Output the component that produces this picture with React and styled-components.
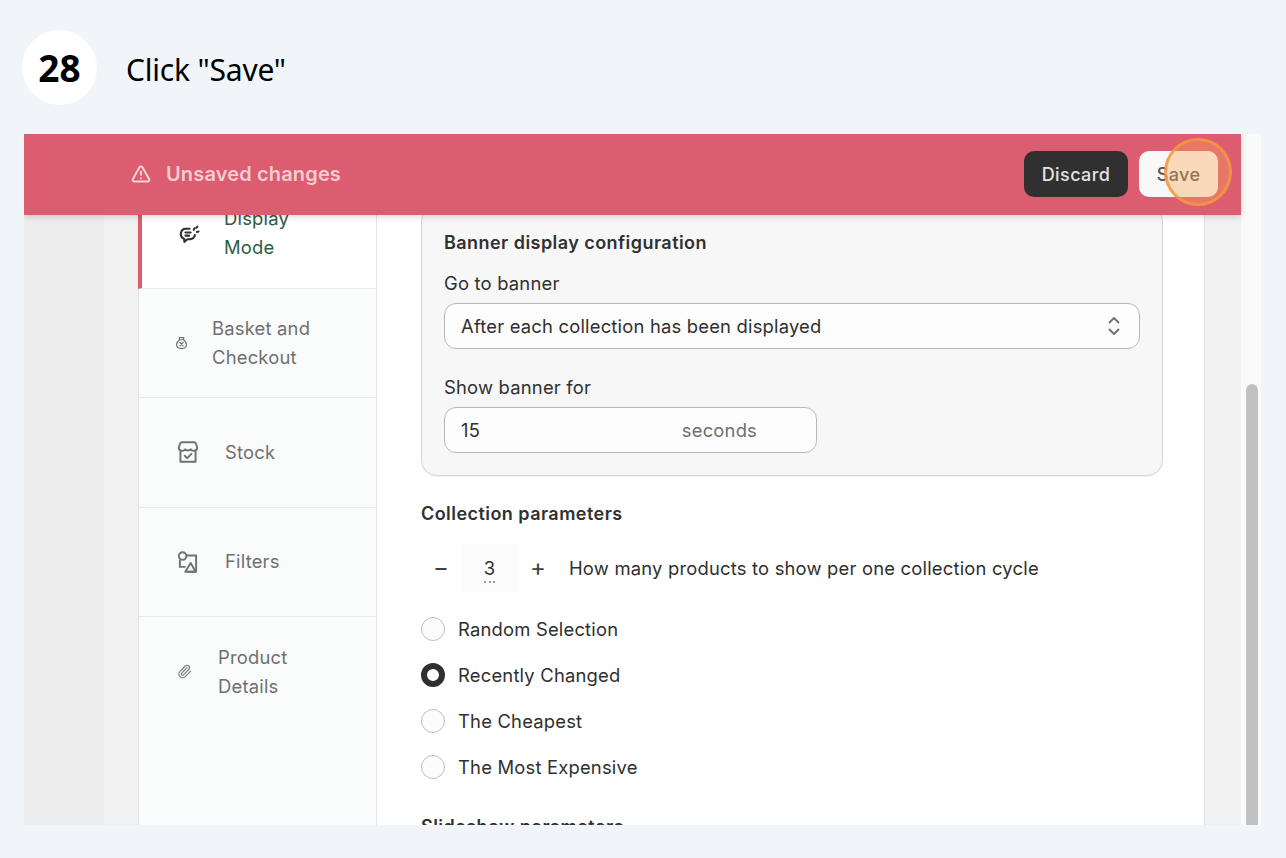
import React from 'react'
import styled, { createGlobalStyle } from 'styled-components'
import { Paperclip, TriangleAlert } from 'lucide-react'

const Global = createGlobalStyle`
  html, body { margin: 0; padding: 0; background: #f1f5fa; }
  body { height: 858px; overflow: hidden; font-family: Inter, "Liberation Sans", sans-serif; }
`

const Page = styled.div`
  width: 1286px;
  height: 858px;
  display: flex;
  flex-direction: column;
`
const StepHeader = styled.header`
  height: 134px;
  padding: 30px 0 0 22px;
  box-sizing: border-box;
  display: flex;
  align-items: flex-start;
  gap: 29px;
  font-family: "Noto Sans", "Open Sans", sans-serif;
  color: #000;
`
const StepNumber = styled.div`
  width: 75px;
  height: 75px;
  border-radius: 50%;
  background: #fff;
  display: flex;
  align-items: center;
  justify-content: center;
  font-size: 37px;
  font-weight: 700;
`
const StepTitle = styled.div`
  font-size: 30px;
  line-height: 80px;
  letter-spacing: -0.2px;
`
const Frame = styled.div`
  position: relative;
  margin-left: 24px;
  width: 1237px;
  height: 691px;
  display: flex;
  overflow: hidden;
`
const Viewport = styled.div`
  width: 1217px;
  display: flex;
  flex-direction: column;
  background: #ededed;
`
const Banner = styled.div`
  position: relative;
  z-index: 2;
  flex: 0 0 81px;
  background: #dc5d70;
  box-shadow: 0 2px 6px rgba(0, 0, 0, 0.15);
  display: flex;
  align-items: center;
  padding: 0 23px 2px 107px;
  box-sizing: border-box;
`
const BannerText = styled.div`
  margin-left: 15px;
  padding-top: 1px;
  flex: 1;
  font-size: 20px;
  font-weight: 600;
  letter-spacing: 0.15px;
  color: rgba(255, 255, 255, 0.7);
`
const Warning = styled(TriangleAlert)`
  color: rgba(255, 255, 255, 0.72);
  flex: none;
`
const Button = styled.button`
  height: 46px;
  width: ${p => p.$w}px;
  margin-left: ${p => p.$ml}px;
  border-radius: 10px;
  border: 0;
  padding: 2px 0 0;
  font: 500 18px Inter, sans-serif;
  letter-spacing: 0.4px;
  background: ${p => (p.$dark ? '#303030' : '#f8f8f8')};
  color: ${p => (p.$dark ? '#e3e3e3' : '#555')};
`
const Workspace = styled.div`
  flex: 1;
  min-height: 0;
  display: flex;
  overflow: hidden;
`
const Gutter = styled.div`
  flex: 0 0 80px;
  background: #ededed;
`
const Surface = styled.div`
  flex: 1;
  background: #f1f1f1;
  padding: 0 36px 0 34px;
  min-width: 0;
`
const Card = styled.div`
  margin-top: -36px;
  display: flex;
  height: 900px;
  background: #fff;
  border-right: 1px solid #dfdfdf;
  font-size: 18.4px;
  letter-spacing: 0.2px;
`
const Sidebar = styled.nav`
  flex: 0 0 239px;
  box-sizing: border-box;
  background: #fafbfb;
  border-left: 1px solid #e3e3e3;
  border-right: 1px solid #e3e3e3;
`
const Tab = styled.div`
  height: 109.5px;
  box-sizing: border-box;
  display: flex;
  align-items: center;
  gap: 24px;
  margin-left: ${p => (p.$active ? -1 : 0)}px;
  padding-left: ${p => (p.$active ? 33 : 36)}px;
  background: ${p => (p.$active ? '#fff' : 'transparent')};
  border-left: ${p => (p.$active ? '4px solid #dc5d70' : '0')};
  border-bottom: ${p => (p.$last ? '0' : '1px solid #e8e8e8')};
  line-height: 29px;
  color: ${p => (p.$active ? '#2f5d46' : '#6f7070')};
  svg { flex: none; }
`
const TabIcon = styled.svg`
  color: ${p => (p.$active ? '#303030' : '#727272')};
  fill: none;
  stroke: currentColor;
  stroke-width: ${p => p.$sw || 1.8};
  stroke-linecap: round;
  stroke-linejoin: round;
`
const Clip = styled(Paperclip)`
  color: #7a7a7a;
  margin: 0 2px;
`
const Main = styled.main`
  flex: 1;
  padding: 26px 41px 0 44px;
  color: #303030;
  min-width: 0;
`
const Panel = styled.section`
  height: 271px;
  box-sizing: border-box;
  background: #f7f7f7;
  border: 1px solid #d6d6d6;
  border-radius: 16px;
  padding: 24px 22px 0;
  box-shadow: 0 1px 1px rgba(0, 0, 0, 0.05);
`
const SectionTitle = styled.h3`
  margin: ${p => p.$mt || 0}px 0 0;
  font-size: 18px;
  font-weight: 600;
  letter-spacing: 0.45px;
  line-height: 26px;
`
const FieldLabel = styled.div`
  line-height: 26px;
  margin: ${p => p.$mt}px 0 7px;
`
const Field = styled.div`
  width: ${p => p.$w}px;
  height: 46px;
  box-sizing: border-box;
  background: #fdfdfd;
  border: 1px solid #b8b8b8;
  border-radius: 12px;
  display: flex;
  align-items: center;
  justify-content: space-between;
  padding: 0 17px 0 16px;
`
const Suffix = styled.span`
  color: #6f6f6f;
  margin-right: 42px;
`
const Stepper = styled.div`
  display: flex;
  align-items: center;
  height: 48px;
  margin-top: 17px;
`
const StepButton = styled.span`
  width: 40px;
  text-align: center;
  font-size: 24px;
  line-height: 48px;
  color: #404040;
`
const StepValue = styled.span`
  width: 57px;
  height: 48px;
  background: #fbfbfb;
  text-align: center;
  line-height: 48px;
  position: relative;
  &::after {
    content: '';
    position: absolute;
    left: 23px;
    bottom: 9px;
    width: 11px;
    border-bottom: 2px dotted #9a9a9a;
  }
`
const StepLabel = styled.span`
  margin-left: 11px;
`
const RadioList = styled.div`
  margin-top: 14px;
  display: flex;
  flex-direction: column;
`
const RadioRow = styled.label`
  height: 46px;
  display: flex;
  align-items: center;
  gap: 13px;
`
const RadioDot = styled.span`
  width: 24px;
  height: 24px;
  box-sizing: border-box;
  border-radius: 50%;
  background: ${p => (p.$on ? '#fff' : '#fcfcfc')};
  border: ${p => (p.$on ? '6px solid #303030' : '1.5px solid #bfbfbf')};
`
const Scrollbar = styled.div`
  flex: 0 0 20px;
  background: #fafafa;
  border-right: 1px solid #efefef;
  box-sizing: border-box;
  padding: 250px 7px 0 5px;
`
const Thumb = styled.div`
  height: 100%;
  width: 12px;
  background: #c1c1c1;
  border-radius: 6px 6px 0 0;
`
const Highlight = styled.div`
  position: absolute;
  left: 1140px;
  top: 4px;
  width: 68px;
  height: 68px;
  box-sizing: border-box;
  border-radius: 50%;
  border: 3px solid rgba(245, 150, 65, 0.85);
  background: rgba(250, 165, 85, 0.38);
  z-index: 3;
`

const Chat = () => (
  <TabIcon $active width="25" height="25" viewBox="-2 0 24 24" $sw={2}>
    <path d="M12 7.500H8.500a5 5 0 0 0-1.600 9.700V20l3-2.500h2.600a5 5 0 0 0 4.600-4" />
    <path d="M8 11h5M8 14h3.500" />
    <path d="M16 8.500l.6-1.500M19 10.500l1.600-.4M18.500 6.500l1-1" />
  </TabIcon>
)
const Bag = () => (
  <TabIcon width="13" height="16" viewBox="0 0 24 24" $sw={2.2}>
    <path d="M8 2h8v4H8zM8.500 6C4 9 3 12 3 15c0 5 3 7 9 7s9-2 9-7c0-3-1-6-5.500-9" />
    <path d="M9 11l6 6M15 11l-6 6" />
  </TabIcon>
)
const Store = () => (
  <TabIcon width="26" height="26" viewBox="0 0 24 24">
    <path d="M6.500 3h11a2 2 0 0 1 1.900 1.400l1.100 3.600c0 3-4.500 4-6 1.500-1 1.400-4 1.400-5 0-1.500 2.500-6 1.500-6-1.500l1.100-3.600A2 2 0 0 1 6.500 3z" />
    <path d="M5 11.500V21h14v-9.500" />
    <path d="M9 15.500l2.200 2.200 4-4" />
  </TabIcon>
)
const Shapes = () => (
  <TabIcon width="26" height="26" viewBox="0 0 24 24">
    <circle cx="7" cy="6.500" r="3.500" />
    <path d="M11 6h8.500v15H12M4.500 10.500V16.500H9" />
    <path d="M9.500 21l5-8 4.500 8z" />
  </TabIcon>
)

const tabs = [
  { label: ['Display', 'Mode'], icon: <Chat />, active: true },
  { label: ['Basket and', 'Checkout'], icon: <Bag /> },
  { label: ['Stock'], icon: <Store /> },
  { label: ['Filters'], icon: <Shapes /> },
  { label: ['Product', 'Details'], icon: <Clip size={15} strokeWidth={1.8} />, last: true },
]

const radios = ['Random Selection', 'Recently Changed', 'The Cheapest', 'The Most Expensive']

const Chevrons = () => (
  <svg width="16" height="22" viewBox="0 0 16 22" fill="none" stroke="#6d6d6d" strokeWidth="1.8" strokeLinecap="round" strokeLinejoin="round">
    <path d="M3.500 7.500L8 3l4.500 4.500M3.500 14.500L8 19l4.500-4.500" />
  </svg>
)

export default function App() {
  return (
    <Page>
      <Global />
      <StepHeader>
        <StepNumber>28</StepNumber>
        <StepTitle>Click "Save"</StepTitle>
      </StepHeader>
      <Frame>
        <Viewport>
          <Banner>
            <Warning size={20} strokeWidth={2.4} />
            <BannerText>Unsaved changes</BannerText>
            <Button $dark $w={104}>Discard</Button>
            <Button $w={79} $ml={11}>Save</Button>
          </Banner>
          <Workspace>
            <Gutter />
            <Surface>
              <Card>
                <Sidebar>
                  {tabs.map(t => (
                    <Tab key={t.label[0]} $active={t.active} $last={t.last}>
                      {t.icon}
                      <div>
                        {t.label.map(l => <div key={l}>{l}</div>)}
                      </div>
                    </Tab>
                  ))}
                </Sidebar>
                <Main>
                  <Panel>
                    <SectionTitle>Banner display configuration</SectionTitle>
                    <FieldLabel $mt={14}>Go to banner</FieldLabel>
                    <Field $w={696}>
                      After each collection has been displayed
                      <Chevrons />
                    </Field>
                    <FieldLabel $mt={25}>Show banner for</FieldLabel>
                    <Field $w={373}>
                      15
                      <Suffix>seconds</Suffix>
                    </Field>
                  </Panel>
                  <SectionTitle $mt={25}>Collection parameters</SectionTitle>
                  <Stepper>
                    <StepButton>−</StepButton>
                    <StepValue>3</StepValue>
                    <StepButton>+</StepButton>
                    <StepLabel>How many products to show per one collection cycle</StepLabel>
                  </Stepper>
                  <RadioList>
                    {radios.map((r, i) => (
                      <RadioRow key={r}>
                        <RadioDot $on={i === 1} />
                        {r}
                      </RadioRow>
                    ))}
                  </RadioList>
                  <SectionTitle $mt={24}>Slideshow parameters</SectionTitle>
                </Main>
              </Card>
            </Surface>
          </Workspace>
        </Viewport>
        <Scrollbar><Thumb /></Scrollbar>
        <Highlight />
      </Frame>
    </Page>
  )
}
